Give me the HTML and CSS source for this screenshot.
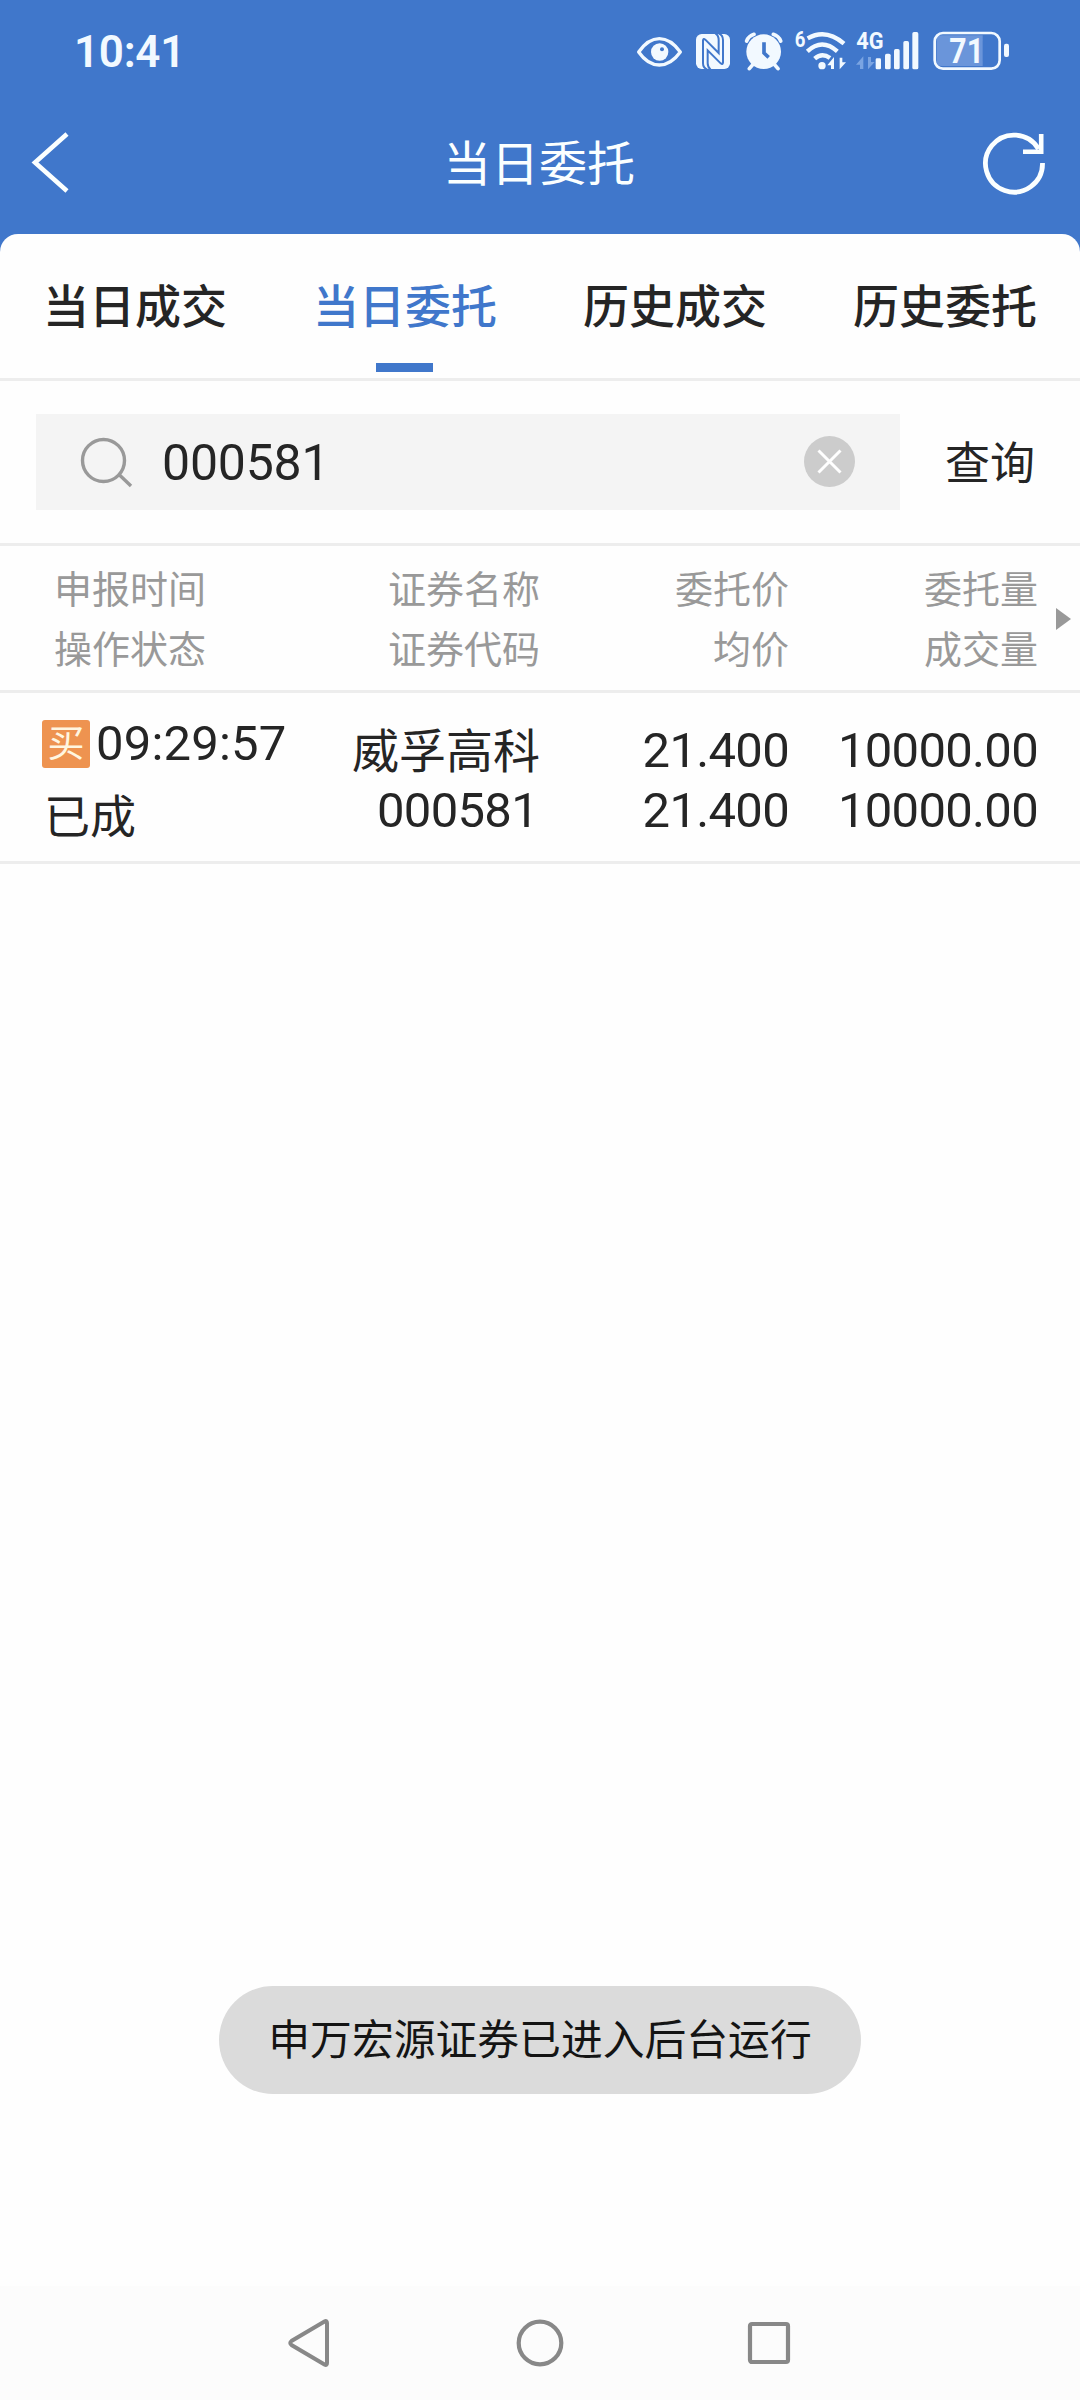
FILE: index.html
```
<!DOCTYPE html>
<html lang="zh-CN">
<head>
<meta charset="utf-8">
<title>当日委托</title>
<link rel="stylesheet" href="styles.css">
</head>
<body>
<div class="screen">
  <header class="top">
    <div class="status">
      <span class="clock">10:41</span>
      <div class="status-icons">
        <svg class="ic-eye" viewBox="48 54 141 132" width="47" height="44"><path d="M56 126Q84 86 118 86T181 126Q153 165 118 165T56 126Z" fill="none" stroke="#f2f9ff" stroke-width="10" stroke-linejoin="round"/><circle cx="119" cy="126" r="26" fill="#f2f9ff"/><circle cx="126" cy="118" r="6" fill="#4077cb"/></svg>
        <svg class="ic-nfc" viewBox="225 54 108 132" width="36" height="44"><rect x="228" y="72" width="102" height="105" rx="17" fill="#f2f9ff"/><path d="M262 179Q249 174 249 160V91Q250 84 256 89L296 129V90Q296 76 286 70M296 70Q309 75 309 90V158Q308 165 302 160L263 121V160Q263 172 272 179" fill="none" stroke="#4077cb" stroke-width="6"/></svg>
        <svg class="ic-alarm" viewBox="372 54 117 132" width="39" height="44"><circle cx="431" cy="125" r="52" fill="#f2f9ff"/><path d="M380 93Q386 78 402 73M482 93Q476 78 460 73" fill="none" stroke="#f2f9ff" stroke-width="11" stroke-linecap="round"/><path d="M399 163 388 176M463 163 474 176" stroke="#f2f9ff" stroke-width="11" stroke-linecap="round"/><path d="M432 97V129L446 142" fill="none" stroke="#4077cb" stroke-width="11"/></svg>
        <svg class="ic-wifi" viewBox="522 54 159 132" width="53" height="44"><text x="524" y="110" class="t-six" textLength="32" lengthAdjust="spacingAndGlyphs">6</text><g fill="none" stroke="#f2f9ff" stroke-width="13"><path d="M563 85Q618 54 672 101"/><path d="M562 124Q606 83 652 124"/><path d="M584 146Q606 126 630 144"/></g><circle cx="606" cy="167" r="11" fill="#f2f9ff"/><path d="M622 166 642 141V177H633V166ZM678 157 659 178V143H667V157Z" fill="#f2f9ff"/></svg>
        <svg class="ic-signal" viewBox="708 54 189 132" width="63" height="44"><text x="709" y="118" class="t-4g" textLength="82" lengthAdjust="spacingAndGlyphs">4G</text><path d="M708 164 730 139V177H720V164ZM764 156 744 178V141H753V156Z" fill="#7aa4e2"/><g fill="#f2f9ff"><rect x="767" y="145" width="16" height="33" rx="4"/><rect x="795" y="131" width="17" height="47" rx="5"/><rect x="822" y="117" width="17" height="61" rx="5"/><rect x="850" y="93" width="17" height="85" rx="5"/><rect x="877" y="66" width="18" height="112" rx="5"/></g></svg>
        <svg class="ic-battery" viewBox="939 54 231 132" width="77" height="44"><path d="M966 76H1088V168H966Q950 168 950 152V92Q950 76 966 76Z" fill="#6a95da"/><rect x="944" y="69" width="195" height="107" rx="25" fill="none" stroke="#f2f9ff" stroke-width="8"/><rect x="1152" y="101" width="15" height="40" rx="6" fill="#f2f9ff"/><text x="988" y="159" class="t-batt" textLength="104" lengthAdjust="spacingAndGlyphs">71</text></svg>
      </div>
    </div>
    <div class="titlebar">
      <svg viewBox="0 0 40 64" width="40" height="64"><path d="M36 3 4 31.500 36 60" fill="none" stroke="#fbffff" stroke-width="4.600"/></svg>
      <h1 class="title">当日委托</h1>
      <svg viewBox="0 0 68 68" width="68" height="68"><path d="M62.500 34A28.500 28.500 0 1 1 58.500 20" fill="none" stroke="#fbffff" stroke-width="4.800"/><path d="M61.200 5V22.700H43" fill="none" stroke="#fbffff" stroke-width="4.600"/></svg>
    </div>
  </header>

  <main class="sheet">
    <nav class="tabs">
      <a class="tab">当日成交</a>
      <a class="tab active">当日委托</a>
      <a class="tab">历史成交</a>
      <a class="tab">历史委托</a>
    </nav>
    <div class="search">
      <div class="field">
        <svg viewBox="0 0 54 52" width="54" height="52"><circle cx="23.500" cy="24.500" r="21" fill="none" stroke="#999" stroke-width="3.400"/><path d="M38.500 38 51 50" stroke="#999" stroke-width="3.400"/></svg>
        <span class="code">000581</span>
        <svg viewBox="0 0 51 51" width="51" height="51"><circle cx="25.500" cy="25.500" r="25.500" fill="#ccc"/><path d="M14.500 14.500 36.500 36.500M36.500 14.500 14.500 36.500" stroke="#fff" stroke-width="3"/></svg>
      </div>
      <span class="query">查询</span>
    </div>
    <div class="grid head">
      <div class="cell first">申报时间<br>操作状态</div>
      <div class="cell">证券名称<br>证券代码</div>
      <div class="cell">委托价<br>均价</div>
      <div class="cell">委托量<br>成交量</div>
      <svg class="more" viewBox="0 0 15 22" width="15" height="22"><path d="M0 0 15 11 0 22Z" fill="#999"/></svg>
    </div>
    <div class="grid row">
      <div class="order">
        <div class="time"><span class="badge">买</span>09:29:57</div>
        <div class="state">已成</div>
      </div>
      <div class="cell"><div class="name">威孚高科</div><div class="num">000581</div></div>
      <div class="cell">21.400<br>21.400</div>
      <div class="cell">10000.00<br>10000.00</div>
    </div>
  </main>

  <div class="toast">申万宏源证券已进入后台运行</div>

  <footer class="navbar">
    <svg viewBox="0 0 48 52" width="48" height="52"><path d="M38.500 4.500Q41 3 41 6V46Q41 49 38.500 47.500L5.500 28Q3 26 5.500 24Z" fill="none" stroke="#888" stroke-width="4"/></svg>
    <svg viewBox="0 0 48 52" width="48" height="52"><circle cx="24" cy="26" r="21.300" fill="none" stroke="#888" stroke-width="4.200"/></svg>
    <svg viewBox="0 0 48 52" width="48" height="52"><rect x="5" y="7" width="38" height="38" rx="2" fill="none" stroke="#888" stroke-width="4.200"/></svg>
  </footer>
</div>
</body>
</html>
```

FILE: styles.css
```
* { box-sizing: border-box; margin: 0; padding: 0; }
body { font-family: Roboto, "Noto Sans CJK SC", sans-serif; color: #252525; }
svg { display: block; flex: none; }
.screen { width: 1080px; height: 2400px; background: #4077cb; display: flex; flex-direction: column; position: relative; }

.top { height: 234px; }
.status { height: 100px; padding: 0 70px 0 74px; display: flex; justify-content: space-between; align-items: center; }
.clock { font-size: 44px; font-weight: 600; color: #f2f9ff; letter-spacing: -0.3px; padding-top: 3px; }
.status-icons { display: flex; }
.ic-nfc { margin-left: 12px; }
.ic-alarm { margin-left: 13px; }
.ic-wifi { margin-left: 11px; }
.ic-signal { margin-left: 9px; }
.ic-battery { margin-left: 14px; }
.t-six { font-size: 64px; font-weight: 700; fill: #f2f9ff; }
.t-4g { font-size: 72px; font-weight: 700; fill: #f2f9ff; }
.t-batt { font-size: 105px; font-weight: 700; fill: #f2f9ff; }
.titlebar { height: 126px; padding: 0 32px 0 31px; display: flex; justify-content: space-between; align-items: center; }
.title { font: 400 48px "Noto Sans CJK SC", sans-serif; color: #fbffff; padding: 0 0 6px 27px; }

.sheet { flex: 1; background: #fefefe; border-radius: 18px 18px 0 0; }
.tabs { height: 147px; border-bottom: 3px solid #ededed; display: grid; grid-template-columns: repeat(4, 270px); }
.tab { display: flex; flex-direction: column; align-items: center; font-size: 46px; font-weight: 500; line-height: 147px; }
.active { color: #4077cb; }
.active::after { content: ""; width: 57px; height: 9px; margin: -18px 1px 0 0; background: #4077cb; }

.search { height: 165px; border-bottom: 3px solid #ededed; padding-left: 36px; display: flex; align-items: center; }
.field { width: 864px; height: 96px; background: #f4f4f4; display: flex; align-items: center; padding: 0 45px 1px 44px; }
.code { flex: 1; font-size: 50px; padding: 2px 0 0 28px; letter-spacing: -0.2px; }
.query { width: 180px; text-align: center; font-size: 45px; padding-bottom: 3px; }

.grid { display: grid; grid-template-columns: 340px 200px 249px 249px 42px; border-bottom: 3px solid #ededed; }
.cell { text-align: right; line-height: 60px; }
.head { height: 147px; padding-top: 14px; font-size: 38px; color: #999; }
.first { text-align: left; padding-left: 54px; }
.more { margin: 48px 0 0 18px; }
.row { height: 171px; padding-top: 28px; font-size: 49px; letter-spacing: -0.7px; }
.name { font-size: 47px; height: 60px; letter-spacing: 0; padding-top: 1px; }
.num { padding-right: 2px; }
.order { padding-left: 42px; letter-spacing: 0; }
.time { height: 48px; margin-top: -1px; display: flex; align-items: center; gap: 6px; line-height: 48px; letter-spacing: 0.2px; }
.badge { width: 48px; height: 48px; border-radius: 3px; background: #ee9350; color: #fff6e0; font-size: 37px; line-height: 49px; text-align: center; }
.state { font-size: 46px; line-height: 60px; padding: 19px 0 0 2px; }

.toast { position: absolute; left: 219px; top: 1986px; width: 642px; height: 108px; border-radius: 54px; background: #dbdbdb; color: #141414; font-size: 41.800px; line-height: 110px; text-align: center; }
.navbar { height: 114px; background: #fcfcfc; display: flex; justify-content: space-between; align-items: center; padding: 0 287px 0 286px; }
```
